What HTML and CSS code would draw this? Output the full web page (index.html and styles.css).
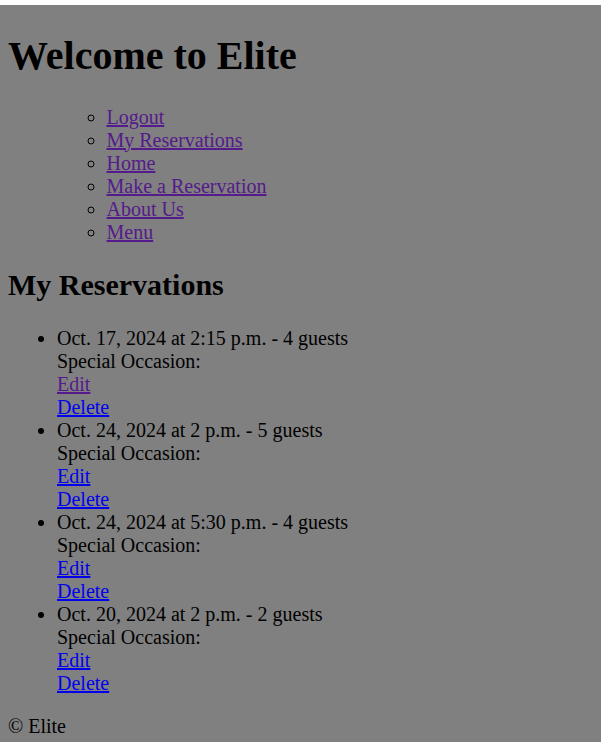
FILE: index.html
```html
<!DOCTYPE html>
<html lang="en">
<head>
<meta charset="utf-8">
<title>Elite</title>
<link rel="stylesheet" href="styles.css">
</head>
<body>
<div class="topbar"></div>
<div class="page">
  <header class="site-header">
    <h1 class="site-title">Welcome to Elite</h1>
    <nav>
      <ul class="nav-list">
        <li><a class="link visited" href="#">Logout</a></li>
        <li><a class="link visited" href="#">My Reservations</a></li>
        <li><a class="link visited" href="#">Home</a></li>
        <li><a class="link visited" href="#">Make a Reservation</a></li>
        <li><a class="link visited" href="#">About Us</a></li>
        <li><a class="link visited" href="#">Menu</a></li>
      </ul>
    </nav>
  </header>
  <main>
    <h2 class="section-title">My Reservations</h2>
    <ul class="res-list">
      <li>
        <div>Oct. 17, 2024 at 2:15 p.m. - 4 guests</div>
        <div>Special Occasion: </div>
        <div><a class="link visited" href="#">Edit</a></div>
        <div><a class="link" href="#">Delete</a></div>
      </li>
      <li>
        <div>Oct. 24, 2024 at 2 p.m. - 5 guests</div>
        <div>Special Occasion: </div>
        <div><a class="link" href="#">Edit</a></div>
        <div><a class="link" href="#">Delete</a></div>
      </li>
      <li>
        <div>Oct. 24, 2024 at 5:30 p.m. - 4 guests</div>
        <div>Special Occasion: </div>
        <div><a class="link" href="#">Edit</a></div>
        <div><a class="link" href="#">Delete</a></div>
      </li>
      <li>
        <div>Oct. 20, 2024 at 2 p.m. - 2 guests</div>
        <div>Special Occasion: </div>
        <div><a class="link" href="#">Edit</a></div>
        <div><a class="link" href="#">Delete</a></div>
      </li>
    </ul>
  </main>
  <footer class="site-footer">
    <p class="copy">&copy; Elite</p>
  </footer>
</div>
</body>
</html>
```
FILE: styles.css
```css
html {
  background: #808080;
}
body {
  margin: 0;
  font-family: "Liberation Serif", "Times New Roman", serif;
  font-size: 20px;
  color: #000;
  background: #808080;
}
.topbar {
  height: 5px;
  background: #ffffff;
}
.page {
  padding: 0 8px;
}
.site-title {
  font-size: 40px;
  font-weight: bold;
  margin: 26.8px 0;
}
.nav-list {
  list-style-type: circle;
  margin: 20px 0;
  padding-left: 98.5px;
}
.section-title {
  font-size: 30px;
  font-weight: bold;
  margin: 24.9px 0;
}
.res-list {
  list-style-type: disc;
  margin: 20px 0;
  padding-left: 49px;
}
.link {
  color: #0000ee;
  text-decoration: underline;
}
.link.visited {
  color: #551a8b;
}
.site-footer {
  margin: 0;
}
.copy {
  margin: 20px 0 0;
}
```
